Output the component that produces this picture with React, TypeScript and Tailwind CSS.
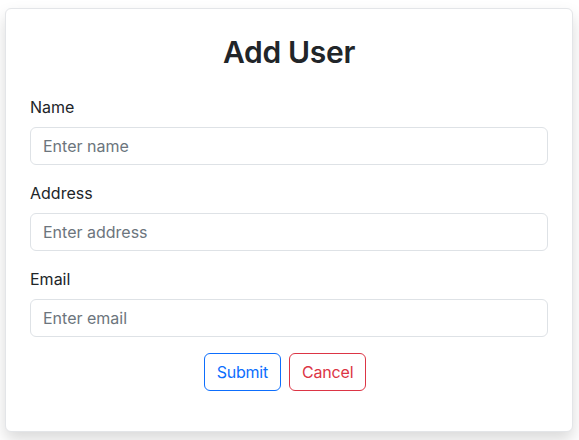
export default function App() {
  const fields = [
    { id: 'name', label: 'Name', placeholder: 'Enter name', type: 'text' },
    { id: 'address', label: 'Address', placeholder: 'Enter address', type: 'text' },
    { id: 'email', label: 'Email', placeholder: 'Enter email', type: 'email' },
  ];

  return (
    <div className="min-h-[440px] bg-white pt-[8px] pl-[5px] font-['Inter',sans-serif] text-[#212529]">
      <form
        className="w-[568px] rounded-[6px] border border-[#e3e5e8] bg-white p-6 pb-6 shadow-[0_8px_16px_rgba(0,0,0,0.15)]"
        onSubmit={e => e.preventDefault()}
      >
        <h2 className="mb-6 text-center text-[30px] font-semibold leading-[38px] tracking-[-0.3px]">Add User</h2>

        {fields.map(f => (
          <div key={f.id} className="mb-4">
            <label htmlFor={f.id} className="mb-2 block text-base leading-6">
              {f.label}
            </label>
            <input
              id={f.id}
              type={f.type}
              placeholder={f.placeholder}
              className="block h-[38px] w-full rounded-[6px] border border-[#dee2e6] px-3 text-base leading-6 placeholder:text-[#6c757d] focus:outline-none"
            />
          </div>
        ))}

        <div className="mb-4 flex justify-center">
          <button
            type="submit"
            className="mr-2 h-[38px] rounded-[6px] border border-[#0d6efd] px-3 text-base tracking-[-0.2px] text-[#0d6efd]"
          >
            Submit
          </button>
          <button
            type="button"
            className="mr-2 h-[38px] rounded-[6px] border border-[#dc3545] px-3 text-base tracking-[-0.2px] text-[#dc3545]"
          >
            Cancel
          </button>
        </div>
      </form>
    </div>
  );
}
